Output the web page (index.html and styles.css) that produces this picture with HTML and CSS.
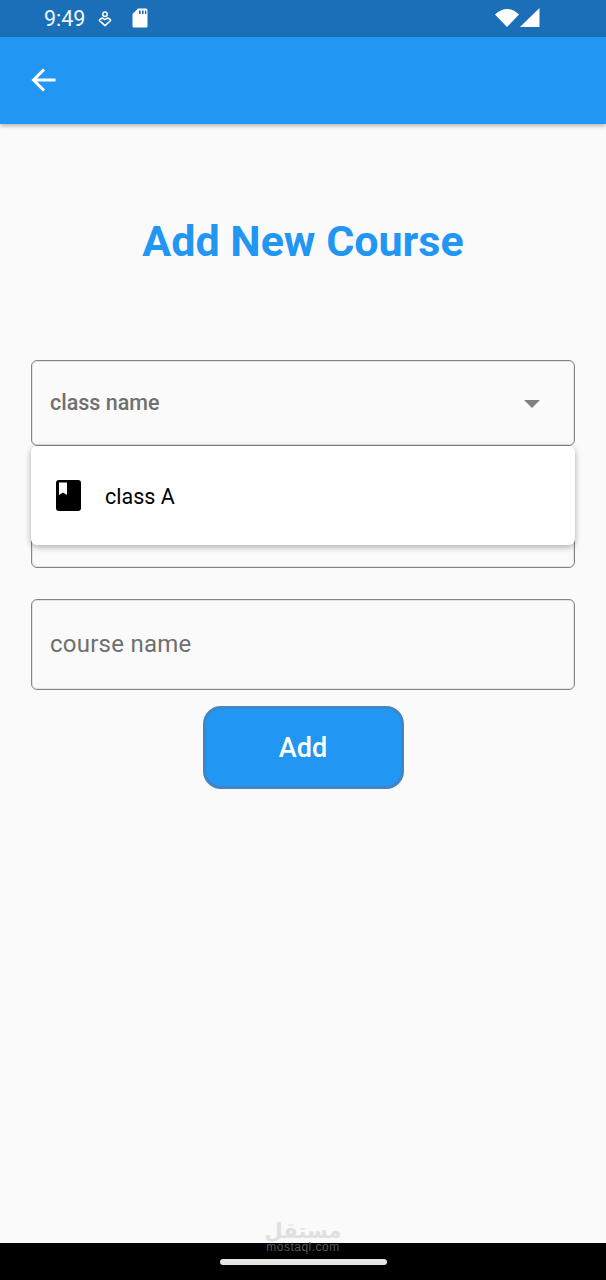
FILE: index.html
```html
<!DOCTYPE html>
<html lang="en">
<head>
<meta charset="utf-8">
<title>Add New Course</title>
<link rel="stylesheet" href="styles.css">
</head>
<body>
<div class="screen">
  <div class="status">
    <span class="time">9:49</span>
    <svg class="st-key" viewBox="0 0 14 16" width="14" height="16"><circle cx="7" cy="3.2" r="2.2" fill="none" stroke="#fff" stroke-width="1.5"/><path d="M1.5 8.600 L4.200 7 L7 8.600 L9.800 7 L12.500 8.600 V9.600 L7 14.600 L1.500 9.600 Z" fill="none" stroke="#fff" stroke-width="1.5" stroke-linejoin="round"/></svg>
    <svg class="st-sd" viewBox="0 0 16 20" width="16" height="20"><path d="M6 0.500 H14 Q15.500 .5 15.500 2 V18 Q15.500 19.500 14 19.500 H2 Q.5 19.500 .5 18 V6 Z" fill="#fff"/><path d="M7 2.500h1.600v3.500H7zM10 2.500h1.600v3.500H10zM12.900 2.500h1.400v3.500h-1.400z" fill="#1a6fb8"/></svg>
    <span class="st-gap"></span>
    <svg class="st-wifi" viewBox="0 0 24 19" width="24" height="19"><path d="M0 6.500 Q12 -4.500 24 6.500 L12 19 Z" fill="#fff"/></svg>
    <svg class="st-signal" viewBox="0 0 20 19" width="20" height="19"><path d="M19.500 0 V19 H0 Z" fill="#fff"/></svg>
  </div>
  <header class="appbar">
    <svg class="back" viewBox="0 0 26 26" width="26" height="26"><path d="M24.500 13 H3 M13 2.500 L2.500 13 L13 23.500" fill="none" stroke="#fff" stroke-width="3"/></svg>
  </header>
  <main class="content">
    <h1 class="title">Add New Course</h1>
    <div class="field field-select">
      <span class="label">class name</span>
      <span class="caret"></span>
    </div>
    <div class="field-stack">
      <div class="menu">
        <svg class="book" viewBox="0 0 25 31" width="25" height="31"><path fill-rule="evenodd" d="M3 0 H22 Q25 0 25 3 V28 Q25 31 22 31 H3 Q0 31 0 28 V3 Q0 0 3 0 Z M3 2.500 V15 L7 12.500 L11 15 V2.500 Z" fill="#000"/></svg>
        <span class="menu-text">class A</span>
      </div>
      <div class="field field-hidden"></div>
    </div>
    <div class="field field-course"><span class="placeholder">course name</span></div>
    <button class="add" type="button">Add</button>
  </main>
  <footer class="nav"><span class="pill"></span></footer>
  <div class="mark"><span class="mark-ar" dir="rtl" lang="ar">مستقل</span><span class="mark-en">mostaql.com</span></div>
</div>
</body>
</html>
```
FILE: styles.css
```css
* { box-sizing: border-box; }
html, body { margin: 0; padding: 0; }
body { font-family: Roboto, "Liberation Sans", sans-serif; background: #fafafa; }
.screen { position: relative; width: 606px; height: 1280px; display: flex; flex-direction: column; overflow: hidden; background: #fafafa; }

.status { height: 37px; flex: none; background: #1a6fb8; display: flex; align-items: center; padding: 0 66px 0 44px; color: #fff; }
.time { font-size: 21.500px; line-height: 37px; width: 41px; color: #eef6fc; white-space: nowrap; }
.st-key { margin-left: 13px; }
.st-sd { margin-left: 20px; margin-top: -1px; }
.st-gap { flex: 1; }
.st-wifi { margin-top: -2px; }
.st-signal { margin-left: 1px; margin-top: -2px; }

.appbar { height: 87px; flex: none; background: #2196f3; display: flex; align-items: center; padding-left: 31px; box-shadow: 0 2px 4px rgba(0,0,0,.28); position: relative; z-index: 2; }
.back { margin-top: -2px; }

.content { flex: 1; display: flex; flex-direction: column; padding: 0 31px; }
.title { margin: 89px 0 1px; height: 56px; font-size: 43px; line-height: 56px; font-weight: 700; color: #2196f3; text-align: center; }

.field { border: 1px solid #858585; box-shadow: inset 0 0 0 1px rgba(0,0,0,.09); border-radius: 6px; background: #fafafa; }
.field-select { margin-top: 90px; height: 86px; display: flex; align-items: center; justify-content: space-between; padding: 0 34px 0 18px; }
.label { font-size: 21.500px; font-weight: 500; color: #707070; margin-top: -2px; }
.caret { width: 0; height: 0; border-left: 8px solid transparent; border-right: 8px solid transparent; border-top: 8px solid #808080; margin-top: 2px; }

.field-stack { position: relative; height: 122px; display: flex; flex-direction: column; justify-content: flex-end; }
.field-hidden { height: 86px; }
.menu { position: absolute; z-index: 1; left: 0; right: 0; top: 0; height: 99px; background: #fff; border-radius: 6px; box-shadow: 0 2px 6px rgba(0,0,0,.32); display: flex; align-items: center; padding-left: 25px; }
.menu-text { margin: 1px 0 0 24px; font-size: 21.500px; color: #000; }

.field-course { margin-top: 31px; height: 91px; display: flex; align-items: center; padding-left: 18px; }
.placeholder { font-size: 24px; color: #6f6f6f; letter-spacing: 0.25px; margin-top: -2px; }

.add { align-self: center; margin-top: 16px; width: 201px; height: 83px; border: 3px solid #3f87c4; border-radius: 18px; background: #2196f3; color: #fff; font-family: Roboto, "Liberation Sans", sans-serif; font-size: 27px; font-weight: 500; padding: 0; }

.nav { height: 37px; flex: none; background: #000; display: flex; justify-content: center; padding-top: 16px; }
.pill { width: 167px; height: 6px; border-radius: 3px; background: #e4e4e4; }

.mark { position: absolute; z-index: 3; left: 303px; top: 1221px; transform: translateX(-50%); display: flex; flex-direction: column; align-items: center; pointer-events: none; }
.mark-ar { display: block; font-family: "DejaVu Sans", sans-serif; font-size: 21px; font-weight: 700; line-height: 20px; color: #e0e0e0; }
.mark-en { display: block; font-family: "Liberation Sans", sans-serif; font-size: 12px; line-height: 12px; letter-spacing: 0.5px; color: #5a5a5a; white-space: nowrap; }
```
